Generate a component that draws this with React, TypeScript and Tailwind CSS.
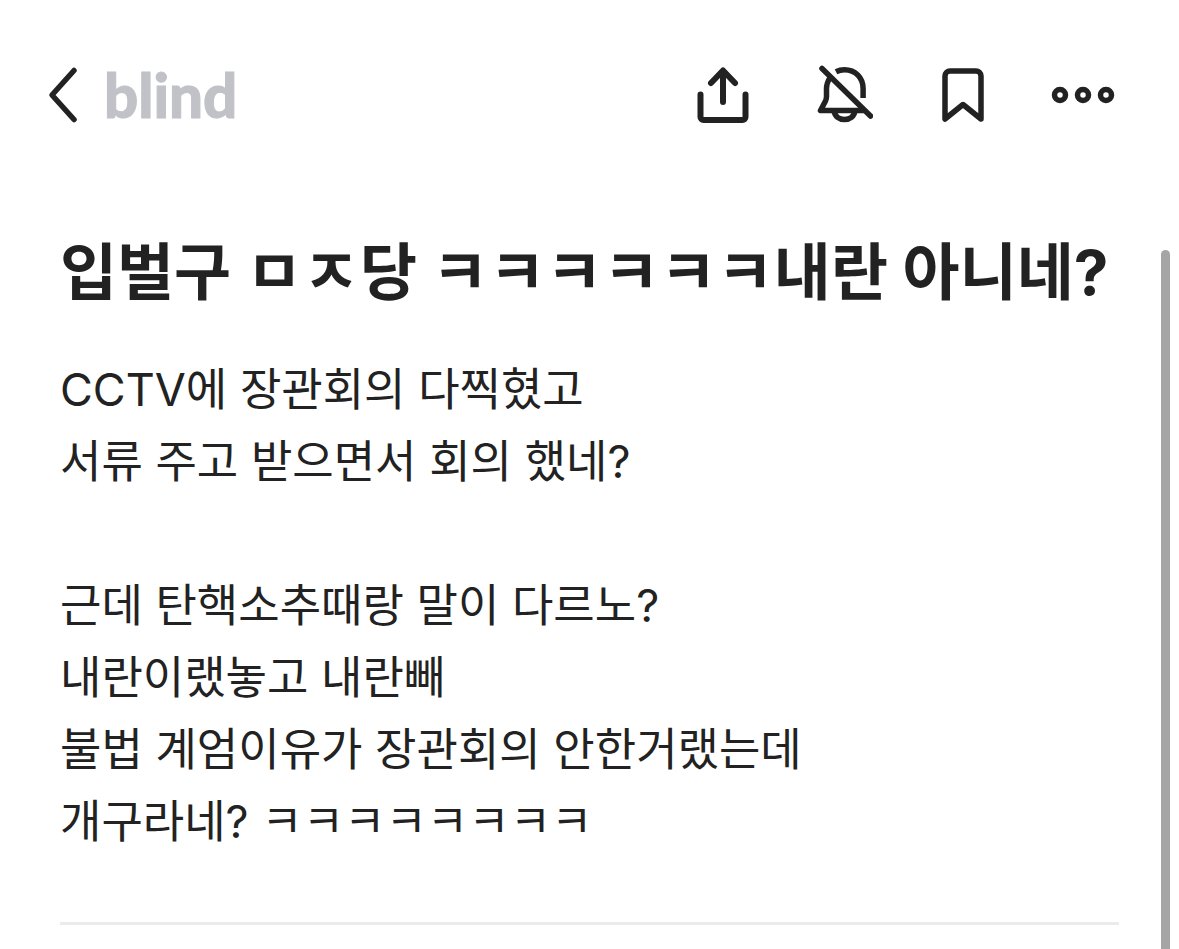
import React, { useState } from "react";

const BODY_LINES = [
  "CCTV에 장관회의 다찍혔고",
  "서류 주고 받으면서 회의 했네?",
  "",
  "근데 탄핵소추때랑 말이 다르노?",
  "내란이랬놓고 내란빼",
  "불법 계엄이유가 장관회의 안한거랬는데",
  "개구라네? ㅋㅋㅋㅋㅋㅋㅋㅋ",
];

function BackIcon() {
  return (
    <svg viewBox="0 0 32 60" className="h-[60px] w-8" fill="none" stroke="currentColor" strokeWidth="5.5" strokeLinecap="round" strokeLinejoin="round">
      <path d="M26 5.5 4 30l22 24.5" />
    </svg>
  );
}

function ShareIcon() {
  return (
    <svg viewBox="0 0 60 60" className="size-[60px]" fill="none" stroke="currentColor" strokeWidth="6" strokeLinecap="round" strokeLinejoin="round">
      <path d="M7.5 29.5V52a3 3 0 0 0 3 3h39a3 3 0 0 0 3-3V29.5" />
      <path d="M30 37V6M18 18 30 5.5 42 18" />
    </svg>
  );
}

function BellOffIcon() {
  return (
    <svg viewBox="0 0 60 60" className="size-[60px]" fill="none" stroke="currentColor" strokeWidth="5.5" strokeLinejoin="round">
      <path d="M9 3.5 57.5 51" strokeLinecap="round" />
      <path d="M23 6.8C25.5 5.5 28.500 4.800 31.500 4.800c11 0 18.600 8 18.600 18.700V33" />
      <path d="M17.500 12c-2.500 3.500-4 7-4 12v7.500c0 1.500-.3 3-1 4.500L7.500 45.500H51" />
      <path d="M21 46c1 5.500 5 8.500 10.500 8.500s9.500-3 10.500-8.500" />
    </svg>
  );
}

function BookmarkIcon() {
  return (
    <svg viewBox="0 0 60 60" className="size-[60px]" fill="none" stroke="currentColor" strokeWidth="5.5" strokeLinejoin="round">
      <path d="M12 54V11a5 5 0 0 1 5-5h26a5 5 0 0 1 5 5v43L30 39.500z" />
    </svg>
  );
}

function MoreIcon() {
  return (
    <svg viewBox="2 0 62 60" className="h-[60px] w-[62px]" fill="none" stroke="currentColor" strokeWidth="5.5" overflow="visible">
      <circle cx="9" cy="30" r="5.500" />
      <circle cx="32" cy="30" r="5.500" />
      <circle cx="55" cy="30" r="5.500" />
    </svg>
  );
}

export default function App() {
  const [muted, setMuted] = useState(true);
  const [saved, setSaved] = useState(false);

  return (
    <div className="relative min-h-screen bg-white font-['Inter','Noto_Sans_CJK_KR',sans-serif] text-[#222222]">
      {/* Top bar */}
      <header className="flex items-center justify-between pt-[65px] pr-16 pl-12">
        <div className="flex items-center gap-6">
          <button type="button" aria-label="뒤로">
            <BackIcon />
          </button>
          <a href="#" className="font-['Lato',sans-serif] text-[60px] leading-[58px] font-black text-[#c1c2c7] [-webkit-text-stroke:1px_#c1c2c7]">
            blind
          </a>
        </div>
        <div className="flex items-center gap-[60px]">
          <button type="button" aria-label="공유">
            <ShareIcon />
          </button>
          <button type="button" aria-label="알림 끄기" aria-pressed={muted} onClick={() => setMuted(!muted)}>
            <BellOffIcon />
          </button>
          <button type="button" aria-label="북마크" aria-pressed={saved} onClick={() => setSaved(!saved)}>
            <BookmarkIcon />
          </button>
          <button type="button" aria-label="더보기">
            <MoreIcon />
          </button>
        </div>
      </header>

      {/* Post */}
      <main className="px-[60px] pt-[103px]">
        <article className="border-b-[3px] border-[#ebebec] pb-[64px]">
          <h1 className="text-[62px] leading-[90px] font-bold whitespace-nowrap">
            입벌구 ㅁㅈ당 ㅋㅋㅋㅋㅋㅋ내란 아니네?
          </h1>
          <div className="mt-9 text-[45px] leading-[72px]">
            {BODY_LINES.map((line, i) => (
              <p key={i} className="min-h-[72px]">
                {line}
              </p>
            ))}
          </div>
        </article>
      </main>

      {/* Scroll indicator */}
      <div className="absolute top-[250px] right-[9px] bottom-0 w-[9px] rounded-t-full bg-[#a5a5a5]" />
    </div>
  );
}
